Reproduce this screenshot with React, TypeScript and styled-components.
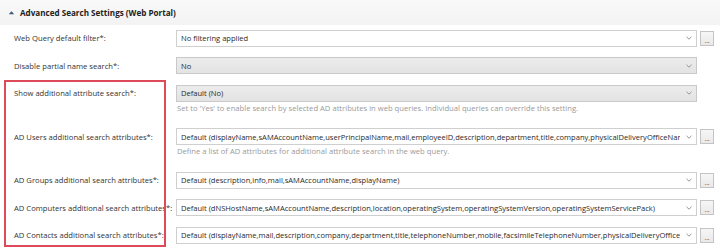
import React from "react";
import styled, { createGlobalStyle } from "styled-components";

const Global = createGlobalStyle`
  html, body { margin: 0; padding: 0; background: #ffffff; }
  body { font-family: "Open Sans", "Noto Sans", sans-serif; color: #333333; }
  * { box-sizing: border-box; }
`;

const Panel = styled.div`
  width: 720px;
  height: 250px;
  overflow: hidden;
  background: #ffffff;
`;

const Header = styled.div`
  height: 25px;
  display: flex;
  align-items: center;
  gap: 5px;
  padding-left: 8px;
  background: linear-gradient(#f9f9f9, #f3f3f3);
`;

const HeaderTitle = styled.span`
  font-weight: 700;
  font-size: 8.1px;
  color: #222222;
`;

const Form = styled.div`
  position: relative;
  display: flex;
  flex-direction: column;
  gap: 10.5px;
  padding-top: 4.5px;
`;

const Row = styled.div`
  display: grid;
  grid-template-columns: 176px 1fr;
  align-items: start;
`;

const Label = styled.div`
  height: 17px;
  display: flex;
  align-items: center;
  padding-left: 14px;
  font-size: 7.65px;
  color: #333333;
  white-space: nowrap;
`;

const Field = styled.div`
  display: flex;
  flex-direction: column;
`;

const ControlLine = styled.div`
  display: flex;
  align-items: center;
  gap: 3px;
`;

const Select = styled.div<{ $disabled?: boolean }>`
  flex: none;
  width: 521px;
  height: 17px;
  display: flex;
  align-items: center;
  padding: 0 4px;
  border: 1px solid ${(p) => (p.$disabled ? "#c9c9c9" : "#cfcfcf")};
  background: ${(p) => (p.$disabled ? "linear-gradient(#ececec, #e3e3e3)" : "#ffffff")};
  font-size: 7.55px;
  color: #2a2a2a;
  overflow: hidden;
`;

const SelectText = styled.span`
  flex: 1;
  min-width: 0;
  overflow: hidden;
  white-space: nowrap;
`;

const Chevron = styled.svg`
  flex: none;
  width: 6px;
  height: 4px;
  margin-left: 6px;
`;

const DotsButton = styled.div`
  flex: none;
  width: 14px;
  height: 15px;
  border: 1px solid #c4c4c4;
  background: linear-gradient(#f6f6f6, #e9e9e9);
  display: flex;
  align-items: flex-end;
  justify-content: center;
  font-size: 6.5px;
  line-height: 9px;
  color: #555555;
`;

const Hint = styled.div`
  font-size: 7.65px;
  line-height: 12px;
  padding: 0 0 4px 1px;
  color: #9a9a9a;
  white-space: nowrap;
`;

const Highlight = styled.div`
  position: absolute;
  left: 4px;
  top: 55px;
  width: 162px;
  height: 167px;
  border: 2px solid #dd4a5a;
  pointer-events: none;
`;

type Item = {
  label: string;
  value: string;
  disabled?: boolean;
  button?: boolean;
  hint?: string;
};

const items: Item[] = [
  { label: "Web Query default filter*:", value: "No filtering applied", button: true },
  { label: "Disable partial name search*:", value: "No", disabled: true },
  {
    label: "Show additional attribute search*:",
    value: "Default (No)",
    disabled: true,
    hint: "Set to 'Yes' to enable search by selected AD attributes in web queries. Individual queries can override this setting.",
  },
  {
    label: "AD Users additional search attributes*:",
    value:
      "Default (displayName,sAMAccountName,userPrincipalName,mail,employeeID,description,department,title,company,physicalDeliveryOfficeName)",
    button: true,
    hint: "Define a list of AD attributes for additional attribute search in the web query.",
  },
  {
    label: "AD Groups additional search attributes*:",
    value: "Default (description,info,mail,sAMAccountName,displayName)",
    button: true,
  },
  {
    label: "AD Computers additional search attributes*:",
    value:
      "Default (dNSHostName,sAMAccountName,description,location,operatingSystem,operatingSystemVersion,operatingSystemServicePack)",
    button: true,
  },
  {
    label: "AD Contacts additional search attributes*:",
    value:
      "Default (displayName,mail,description,company,department,title,telephoneNumber,mobile,facsimileTelephoneNumber,physicalDeliveryOfficeName)",
    button: true,
  },
];

const ChevronDown = () => (
  <Chevron viewBox="0 0 6 4">
    <path d="M0.5 0.8 L3 3.2 L5.5 0.8" fill="none" stroke="#8a8a8a" strokeWidth="0.9" />
  </Chevron>
);

export default function App() {
  return (
    <Panel>
      <Global />
      <Header>
        <svg width="7" height="5" viewBox="0 0 7 5">
          <path d="M0.8 4.2 L3.5 1.2 L6.2 4.2 Z" fill="#3b5a7a" />
        </svg>
        <HeaderTitle>Advanced Search Settings (Web Portal)</HeaderTitle>
      </Header>
      <Form>
        {items.map((it) => (
          <Row key={it.label}>
            <Label>{it.label}</Label>
            <Field>
              <ControlLine>
                <Select $disabled={it.disabled}>
                  <SelectText>{it.value}</SelectText>
                  <ChevronDown />
                </Select>
                {it.button && <DotsButton>...</DotsButton>}
              </ControlLine>
              {it.hint && <Hint>{it.hint}</Hint>}
            </Field>
          </Row>
        ))}
        <Highlight />
      </Form>
    </Panel>
  );
}
